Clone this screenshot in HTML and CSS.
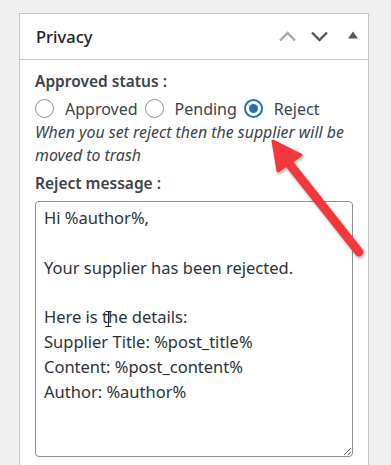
FILE: index.html
```html
<!DOCTYPE html>
<html lang="en">
<head>
  <meta charset="UTF-8">
  <meta name="viewport" content="width=device-width, initial-scale=1.0">
  <title>Privacy | Supplier</title>
  <link rel="stylesheet" href="styles.css">
</head>
<body>
  <div class="postbox">
    <div class="postbox-header">
      <h2>Privacy</h2>
      <div class="handle-actions">
        <button class="handle-btn up" aria-label="Move up">
          <svg width="19" height="11" viewBox="0 0 19 11"><path d="M2 9.5 L9.5 2 L17 9.5" fill="none" stroke="currentColor" stroke-width="2.4"/></svg>
        </button>
        <button class="handle-btn down" aria-label="Move down">
          <svg width="19" height="11" viewBox="0 0 19 11"><path d="M2 1.5 L9.5 9 L17 1.5" fill="none" stroke="currentColor" stroke-width="2.4"/></svg>
        </button>
        <button class="handle-btn toggle" aria-label="Toggle panel">
          <svg width="10" height="8" viewBox="0 0 10 8"><path d="M0 7.5 L5 0.5 L10 7.5 Z" fill="currentColor"/></svg>
        </button>
      </div>
    </div>

    <div class="inside">
      <p class="field-label">Approved status :</p>
      <div class="radio-row">
        <label class="radio"><input type="radio" name="status" value="approved"> Approved</label>
        <label class="radio"><input type="radio" name="status" value="pending"> Pending</label>
        <label class="radio"><input type="radio" name="status" value="reject" checked> Reject</label>
      </div>
      <p class="description">When you set reject then the supplier will be moved to trash</p>

      <label class="field-label" for="reject-message">Reject message :</label>
      <textarea id="reject-message" rows="10">Hi %author%,

Your supplier has been rejected.

Here is the details:
Supplier Title: %post_title%
Content: %post_content%
Author: %author%</textarea>
    </div>

    <!-- text cursor over the textarea -->
    <svg class="ibeam" width="7" height="16" viewBox="0 0 7 16"><path d="M0.5 0.5 H6.5 M3.5 0.5 V15.5 M0.5 15.5 H6.5" fill="none" stroke="#222" stroke-width="1"/></svg>

    <!-- annotation arrow -->
    <svg class="callout" width="110" height="130" viewBox="0 0 110 130">
      <defs>
        <filter id="shadow" x="-20%" y="-20%" width="140%" height="140%">
          <feDropShadow dx="1" dy="2" stdDeviation="1.5" flood-color="#000" flood-opacity="0.3"/>
        </filter>
      </defs>
      <g filter="url(#shadow)" fill="#f2393e" stroke="#f2393e" stroke-linejoin="round" stroke-linecap="round">
        <line x1="20" y1="25" x2="92" y2="116" stroke-width="9"/>
        <path d="M6 5 L34 19 L11 35 Z" stroke-width="3"/>
      </g>
    </svg>
  </div>
</body>
</html>
```

FILE: styles.css
```css
body {
  font-family: "Noto Sans", "Open Sans", Arial, sans-serif;
  margin: 0;
  padding: 13px 22px 0 19px;
  background-color: #f0f0f1;
  color: #1d2327;
  overflow: hidden;
}

.postbox {
  position: relative;
  width: 348px;
  min-height: 470px;
  background-color: #fff;
  border: 1px solid #c3c4c7;
}

.postbox-header {
  display: flex;
  align-items: center;
  justify-content: space-between;
  height: 45px;
  padding: 0 10px 0 16px;
  border-bottom: 1px solid #c3c4c7;
}

.postbox-header h2 {
  margin: 0;
  font-size: 16.5px;
  font-weight: 500;
  color: #1d2327;
}

.handle-actions {
  display: flex;
  align-items: center;
  gap: 13px;
}

.handle-btn {
  display: flex;
  align-items: center;
  justify-content: center;
  padding: 0;
  border: none;
  background: none;
  cursor: pointer;
}

.handle-btn.up {
  color: #a7aaad;
}

.handle-btn.down {
  color: #50575e;
}

.handle-btn.toggle {
  color: #50575e;
  margin-left: 6px;
  margin-top: -3px;
}

.inside {
  padding: 10px 15px 0 15px;
}

.field-label {
  display: block;
  margin: 0 0 3px;
  font-size: 15.5px;
  font-weight: 600;
  color: #3c434a;
}

.radio-row {
  display: flex;
  align-items: center;
  gap: 7px;
  height: 27px;
}

.radio {
  display: flex;
  align-items: center;
  gap: 11px;
  font-size: 16px;
  color: #3c434a;
  cursor: pointer;
}

.radio input {
  appearance: none;
  -webkit-appearance: none;
  width: 19px;
  height: 19px;
  margin: 0;
  border: 1px solid #8c8f94;
  border-radius: 50%;
  background: #fff;
  display: flex;
  align-items: center;
  justify-content: center;
}

.radio input:checked {
  border: 2px solid #2271b1;
}

.radio input:checked::before {
  content: "";
  width: 9px;
  height: 9px;
  border-radius: 50%;
  background-color: #2271b1;
}

.description {
  margin: -1px 0 5px;
  font-size: 15.9px;
  font-style: italic;
  line-height: 23px;
  color: #3c434a;
}

textarea {
  display: block;
  box-sizing: border-box;
  width: 318px;
  height: 256px;
  margin-top: 7px;
  padding: 4px 8px;
  border: 1px solid #8c8f94;
  border-radius: 4px;
  font-family: "Noto Sans", "Open Sans", Arial, sans-serif;
  font-size: 16.5px;
  line-height: 24.8px;
  color: #2c3338;
  resize: vertical;
}

.ibeam {
  position: absolute;
  top: 297px;
  left: 85px;
}

.callout {
  position: absolute;
  top: 122px;
  left: 247px;
}
```
